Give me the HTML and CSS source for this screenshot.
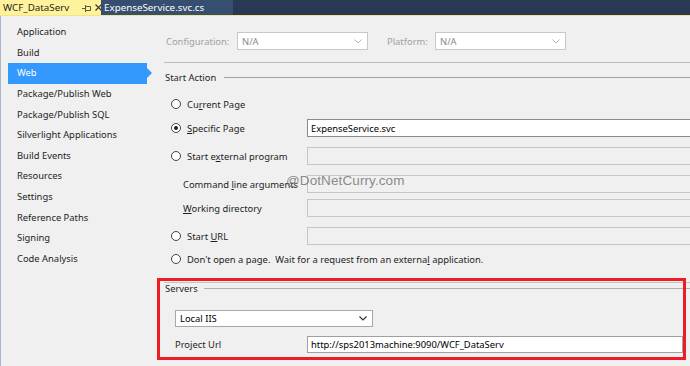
FILE: index.html
```html
<!DOCTYPE html>
<html>
<head>
<meta charset="utf-8">
<link rel="stylesheet" href="styles.css">
</head>
<body>
<div class="tabs">
  <div class="tab tab-active">
    <span class="tab-title">WCF_DataServ</span>
    <svg class="pin" width="9" height="8" viewBox="0 0 9 8"><path d="M0 4.5H3M3.5 1V8M3.5 2.5H8.5V6.5H3.5" fill="none" stroke="#5a5a3a" stroke-width="1"/></svg>
    <svg class="close" width="7" height="7" viewBox="0 0 7 7"><path d="M0.5 0.5L6.5 6.5M6.5 0.5L0.5 6.5" stroke="#3c3c28" stroke-width="1.2"/></svg>
  </div>
  <div class="tab tab-other">ExpenseService.svc.cs</div>
</div>
<div class="main">
  <nav class="nav">
    <div class="item">Application</div>
    <div class="item">Build</div>
    <div class="item item-sel">Web</div>
    <div class="item">Package/Publish Web</div>
    <div class="item">Package/Publish SQL</div>
    <div class="item">Silverlight Applications</div>
    <div class="item">Build Events</div>
    <div class="item">Resources</div>
    <div class="item">Settings</div>
    <div class="item">Reference Paths</div>
    <div class="item">Signing</div>
    <div class="item">Code Analysis</div>
  </nav>
  <div class="content">
    <div class="cfg-row">
      <span class="cfg-label lbl-config">Configuration:</span>
      <div class="combo combo-dis"><span>N/A</span><svg class="chev" width="8" height="5" viewBox="0 0 8 5"><path d="M0.5 0.5L4 4L7.5 0.5" fill="none" stroke="#b4b4b4" stroke-width="1"/></svg></div>
      <span class="cfg-label lbl-platform">Platform:</span>
      <div class="combo combo-dis"><span>N/A</span><svg class="chev" width="8" height="5" viewBox="0 0 8 5"><path d="M0.5 0.5L4 4L7.5 0.5" fill="none" stroke="#b4b4b4" stroke-width="1"/></svg></div>
    </div>
    <div class="sep"></div>
    <div class="group-head head-start"><span>Start Action</span><div class="gline"></div></div>

    <div class="row row-current">
      <span class="radio"></span><span class="rlabel">Cu<u>r</u>rent Page</span>
    </div>
    <div class="row row-specific">
      <span class="radio radio-on"></span><span class="rlabel"><u>S</u>pecific Page</span>
      <div class="tbox tbox-on">ExpenseService.svc</div>
    </div>
    <div class="row row-ext">
      <span class="radio"></span><span class="rlabel">Start e<u>x</u>ternal program</span>
      <div class="tbox tbox-dis"></div>
    </div>
    <div class="row row-cmd">
      <span class="sublabel">Command <u>l</u>ine arguments</span>
      <div class="tbox tbox-dis"></div>
    </div>
    <div class="row row-wd">
      <span class="sublabel"><u>W</u>orking directory</span>
      <div class="tbox tbox-dis"></div>
    </div>
    <div class="row row-url">
      <span class="radio"></span><span class="rlabel">Start <u>U</u>RL</span>
      <div class="tbox tbox-dis"></div>
    </div>
    <div class="row row-dont">
      <span class="radio"></span><span class="rlabel">Don't open a page.&nbsp; Wait for a request from an externa<u>l</u> application.</span>
    </div>

    <div class="sep sep2"></div>
    <div class="group-head head-servers"><span>Servers</span><div class="gline"></div></div>
    <div class="combo combo-srv"><span>Local IIS</span><svg class="chev" width="8" height="5" viewBox="0 0 8 5"><path d="M0.5 0.5L4 4L7.5 0.5" fill="none" stroke="#333" stroke-width="1.2"/></svg></div>
    <div class="row row-proj">
      <span class="projlabel">Pro<u>j</u>ect Url</span>
      <div class="tbox tbox-on tbox-proj">http://sps2013machine:9090/WCF_DataServ</div>
    </div>
  </div>
</div>
<div class="redbox"></div>
<div class="watermark">@DotNetCurry.com</div>
</body>
</html>
```

FILE: styles.css
```css
html, body {
  margin: 0;
  padding: 0;
}
body {
  width: 690px;
  height: 366px;
  overflow: hidden;
  background: #f0f0f0;
  font-family: "Noto Sans", "Open Sans", sans-serif;
  font-size: 9.4px;
  color: #1e1e1e;
  position: relative;
}
u { text-decoration: underline; text-underline-offset: 1px; }

.tabs {
  display: flex;
  height: 15px;
  background: #293955;
  border-bottom: 1px solid #f5e58a;
}
.tab {
  display: flex;
  align-items: center;
  height: 15px;
  font-size: 9.8px;
  white-space: nowrap;
}
.tab-active {
  width: 101px;
  background: #fff29d;
  color: #1e1e1e;
  padding-left: 3px;
  box-sizing: border-box;
}
.tab-title { width: 79px; flex-shrink: 0; }
.pin { margin-right: 4px; flex-shrink: 0; }
.close { flex-shrink: 0; }
.tab-other {
  width: 132px;
  background: #364e6f;
  color: #ffffff;
  padding-left: 3px;
  box-sizing: border-box;
}

.main {
  display: flex;
  height: 350px;
}
.nav {
  width: 164px;
  border-left: 1px solid #a7b4cb;
  padding-top: 6px;
  box-sizing: border-box;
  flex-shrink: 0;
}
.item {
  height: 20.64px;
  line-height: 20.64px;
  padding-left: 16px;
  position: relative;
  white-space: nowrap;
}
.item-sel {
  margin-left: 7px;
  width: 139px;
  padding-left: 9px;
  box-sizing: border-box;
  background: #3399ff;
  color: #ffffff;
}
.item-sel::after {
  content: "";
  position: absolute;
  right: -5px;
  top: 5px;
  border-left: 5px solid #3399ff;
  border-top: 5px solid transparent;
  border-bottom: 5px solid transparent;
}

.content {
  flex: 1;
  display: flex;
  flex-direction: column;
  min-width: 0;
}
.cfg-row {
  display: flex;
  align-items: center;
  height: 18px;
  margin-top: 16px;
  padding-left: 2px;
}
.cfg-label { color: #a0a0a0; flex-shrink: 0; }
.lbl-config { width: 71px; }
.lbl-platform { width: 48px; margin-left: 19px; }
.combo {
  display: flex;
  align-items: center;
  justify-content: space-between;
  box-sizing: border-box;
  height: 18px;
  background: #ffffff;
  padding: 0 5px 0 4px;
  flex-shrink: 0;
}
.combo-dis {
  width: 131px;
  border: 1px solid #c8c8c8;
  color: #8a8a8a;
}
.sep {
  height: 1px;
  background: #bdbdbd;
  margin-top: 12px;
  margin-right: -10px;
}
.group-head {
  display: flex;
  align-items: center;
  padding-left: 1px;
  margin-right: -10px;
}
.head-start { height: 14px; margin-top: 7px; }
.head-start .gline { margin-left: 8px; }
.gline {
  flex: 1;
  height: 1px;
  background: #a0a0a0;
}
.row {
  display: flex;
  align-items: center;
  height: 18px;
  margin-right: -12px;
}
.row-current { margin-top: 11px; }
.row-specific { margin-top: 6px; }
.row-ext { margin-top: 10px; }
.row-cmd { margin-top: 10px; }
.row-wd { margin-top: 6px; }
.row-url { margin-top: 10px; }
.row-dont { margin-top: 5px; }
.radio {
  width: 10px;
  height: 10px;
  box-sizing: border-box;
  border: 1px solid #444444;
  border-radius: 50%;
  background: #ffffff;
  margin-left: 7px;
  display: flex;
  align-items: center;
  justify-content: center;
  flex-shrink: 0;
}
.radio-on::after {
  content: "";
  width: 4px;
  height: 4px;
  border-radius: 50%;
  background: #1e1e1e;
}
.rlabel { margin-left: 6px; width: 120px; white-space: nowrap; flex-shrink: 0; }
.row-dont .rlabel { width: auto; }
.sublabel { margin-left: 19px; width: 124px; white-space: nowrap; flex-shrink: 0; }
.tbox {
  flex: 1;
  height: 18px;
  box-sizing: border-box;
  display: flex;
  align-items: center;
  padding-left: 3px;
  min-width: 0;
}
.tbox-on {
  background: #ffffff;
  border: 1px solid #8a8a8a;
  color: #000000;
}
.tbox-dis {
  border: 1px solid #c6c6c6;
  background: #f0f0f0;
}
.sep2 { margin-top: 14px; background: #c4c4c4; }
.head-servers { height: 11px; }
.head-servers .gline { margin-left: 6px; background: #b0b0b0; }
.combo-srv {
  width: 198px;
  height: 17px;
  margin-left: 11px;
  margin-top: 16px;
  border: 1px solid #a8a8a8;
  color: #000000;
}
.row-proj { margin-top: 9px; height: 17px; margin-right: 7px; }
.projlabel { margin-left: 11px; width: 132px; flex-shrink: 0; }
.tbox-proj { height: 17px; border-color: #a0a0a0; }

.redbox {
  position: absolute;
  left: 157px;
  top: 278px;
  width: 529px;
  height: 82px;
  box-sizing: border-box;
  border: 3px solid #ee1c25;
}
.watermark {
  position: absolute;
  left: 286px;
  top: 173px;
  font-family: "Liberation Sans", Arial, sans-serif;
  font-size: 13.5px;
  color: rgba(110, 110, 110, 0.8);
  letter-spacing: 0.1px;
}
```
